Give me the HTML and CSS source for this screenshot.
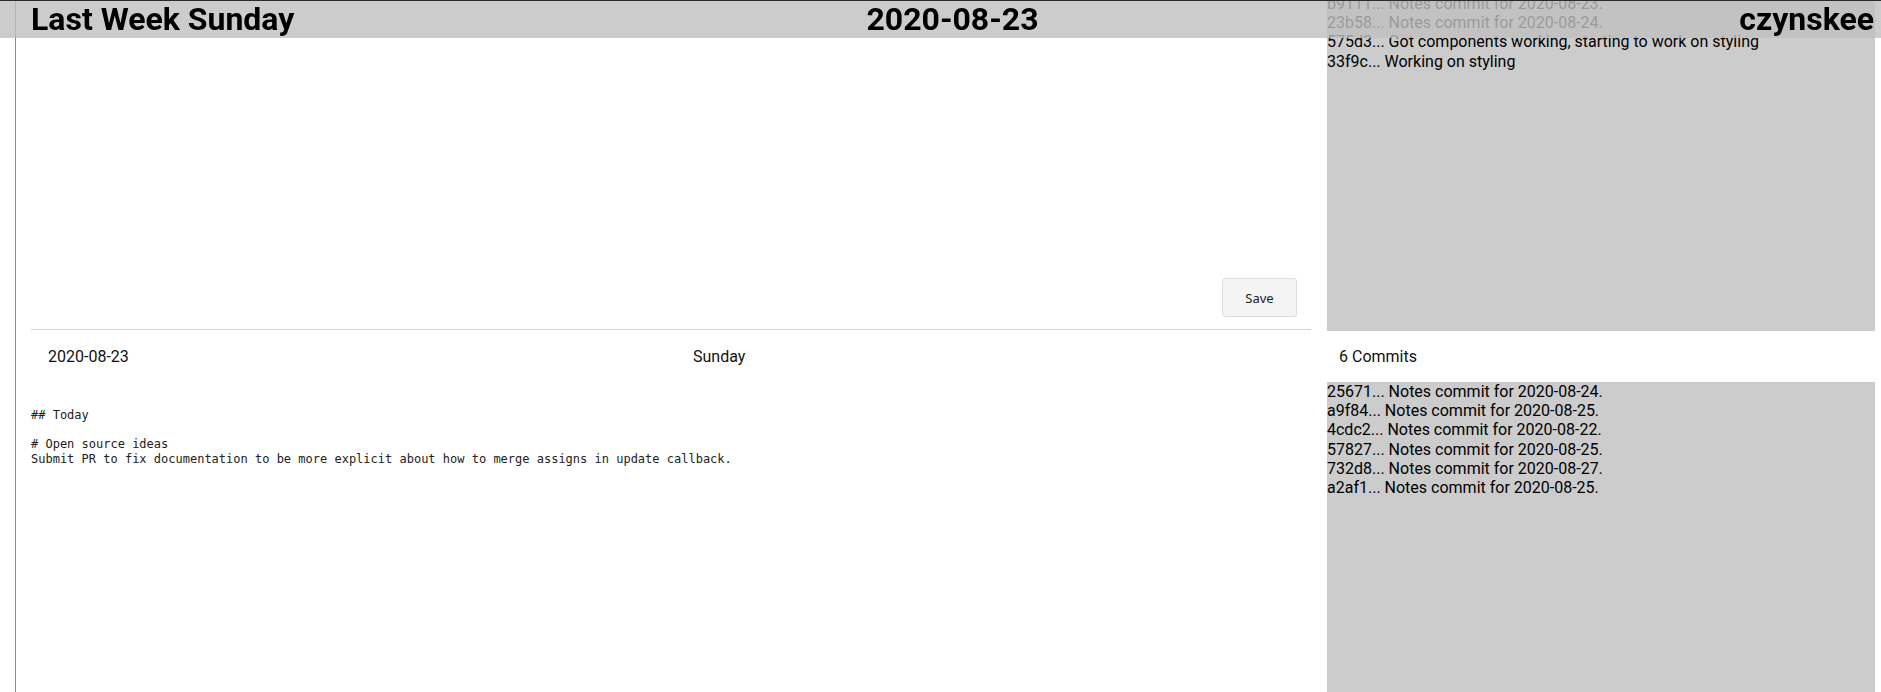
FILE: index.html
```html
<!DOCTYPE html>
<html lang="en">
<head>
<meta charset="utf-8">
<title>Last Week Sunday</title>
<link rel="stylesheet" href="styles.css">
</head>
<body>
<header class="topbar">
  <h1 class="topbar-title">Last Week Sunday</h1>
  <h1 class="topbar-date">2020-08-23</h1>
  <h1 class="topbar-user">czynskee</h1>
</header>
<div class="page">
  <main class="notes-col">
    <section class="editor">
      <button class="save-btn" type="button">Save</button>
    </section>
    <div class="meta-row">
      <span class="meta-date">2020-08-23</span>
      <span class="meta-day">Sunday</span>
    </div>
    <pre class="notes-body">## Today

# Open source ideas
Submit PR to fix documentation to be more explicit about how to merge assigns in update callback.</pre>
  </main>
  <aside class="commits-col">
    <div class="commit-panel commit-panel-top">
      <ul class="commit-list commit-list-scrolled">
        <li>b9111... Notes commit for 2020-08-23.</li>
        <li>23b58... Notes commit for 2020-08-24.</li>
        <li>575d3... Got components working, starting to work on styling</li>
        <li>33f9c... Working on styling</li>
      </ul>
    </div>
    <div class="commit-count">6 Commits</div>
    <div class="commit-panel commit-panel-bottom">
      <ul class="commit-list">
        <li>25671... Notes commit for 2020-08-24.</li>
        <li>a9f84... Notes commit for 2020-08-25.</li>
        <li>4cdc2... Notes commit for 2020-08-22.</li>
        <li>57827... Notes commit for 2020-08-25.</li>
        <li>732d8... Notes commit for 2020-08-27.</li>
        <li>a2af1... Notes commit for 2020-08-25.</li>
      </ul>
    </div>
  </aside>
</div>
</body>
</html>
```
FILE: styles.css
```css
* { box-sizing: border-box; }

html, body {
  margin: 0;
  padding: 0;
  height: 100%;
  overflow: hidden;
  background: #ffffff;
  font-family: Roboto, "Liberation Sans", sans-serif;
  color: #000;
}

.topbar {
  position: fixed;
  top: 0;
  left: 0;
  right: 0;
  z-index: 10;
  height: 38px;
  border-top: 1px solid #2b2b2b;
  background: rgba(191, 191, 191, 0.8);
  display: grid;
  grid-template-columns: 1fr auto 1fr;
  align-items: center;
  padding: 0 7px 0 31px;
}

.topbar h1 {
  margin: 0;
  font-size: 32px;
  font-weight: 700;
  line-height: 37px;
  color: #000;
}

.topbar-title { justify-self: start; }
.topbar-date { justify-self: center; }
.topbar-user { justify-self: end; }

.page {
  height: 100vh;
  margin-left: 15px;
  border-left: 1px solid #8a8a8a;
  padding: 0 6px 0 15px;
  display: grid;
  grid-template-columns: 1fr 548px;
  column-gap: 16px;
}

.notes-col {
  display: flex;
  flex-direction: column;
  min-width: 0;
}

.editor {
  height: 330px;
  border-bottom: 1px solid #d4d4d4;
  display: flex;
  justify-content: flex-end;
  align-items: flex-end;
  padding: 0 14px 12px 0;
}

.save-btn {
  width: 75px;
  height: 39px;
  background: #f4f4f4;
  border: 1px solid #dcdcdc;
  border-radius: 3px;
  font-family: "Noto Sans", "DejaVu Sans", sans-serif;
  font-size: 13px;
  color: #222;
  padding: 0;
}

.meta-row {
  height: 52px;
  display: grid;
  grid-template-columns: 1fr 1fr;
  align-items: center;
  font-size: 16px;
  color: #111;
}

.meta-date { padding-left: 17px; }
.meta-day { padding-left: 22px; }

.notes-body {
  margin: 26px 0 0 0;
  font-family: "DejaVu Sans Mono", "Liberation Mono", monospace;
  font-size: 12px;
  line-height: 14.6px;
  color: #222;
  white-space: pre;
}

.commits-col {
  display: flex;
  flex-direction: column;
  min-width: 0;
}

.commit-panel {
  background: #cccccc;
  overflow: hidden;
}

.commit-panel-top {
  height: 331px;
  flex: none;
}

.commit-panel-bottom {
  flex: 1;
}

.commit-list {
  list-style: none;
  margin: 0;
  padding: 0;
  font-size: 16px;
  line-height: 19.2px;
  color: #000;
}

.commit-list-scrolled {
  margin-top: -6px;
}

.commit-count {
  height: 51px;
  display: flex;
  align-items: center;
  padding-left: 12px;
  font-size: 16px;
  color: #111;
}
```
